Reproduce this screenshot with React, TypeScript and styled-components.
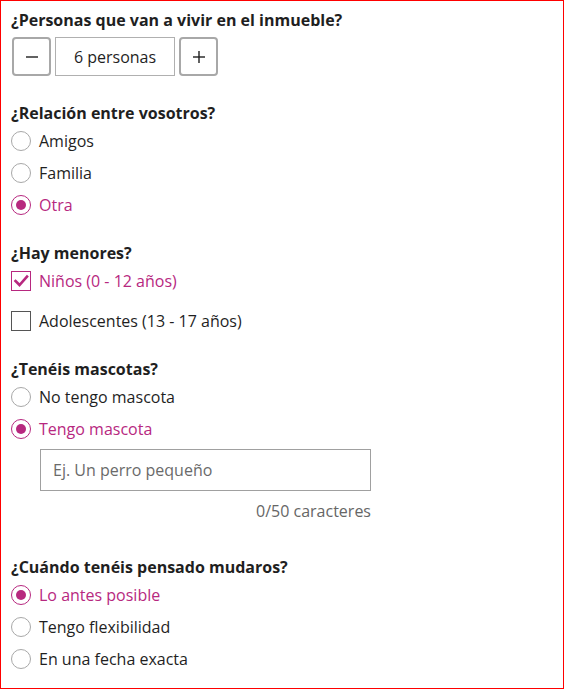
import React, { useState } from "react";
import styled, { createGlobalStyle } from "styled-components";

const ACCENT = "#b7287f";
const TEXT = "#1f1f1f";

const Global = createGlobalStyle`
  html, body { margin: 0; padding: 0; background: #fff; }
  body { font-family: "Open Sans", "Noto Sans", Arial, sans-serif; color: ${TEXT}; }
  * { box-sizing: border-box; }
`;

const Page = styled.div`
  width: 564px;
  height: 689px;
  border: 1px solid #ff0000;
  padding: 7px 10px 0 10px;
  display: flex;
  flex-direction: column;
  gap: 20px;
`;

const Section = styled.section`
  display: flex;
  flex-direction: column;
`;

const Heading = styled.h3`
  margin: 0;
  font-size: 16px;
  font-weight: 700;
  line-height: 24px;
  color: ${TEXT};
`;

const Stepper = styled.div`
  display: flex;
  align-items: center;
  gap: 4px;
  margin: 5px 0 5px 1px;
`;

const StepButton = styled.button`
  width: 39px;
  height: 39px;
  border: 2px solid #a8a8a8;
  border-radius: 4px;
  background: #fff;
  display: flex;
  align-items: center;
  justify-content: center;
  padding: 0;
  cursor: pointer;
  color: ${TEXT};
`;

const StepValue = styled.div`
  width: 120px;
  height: 39px;
  border: 1px solid #b0b0b0;
  display: flex;
  align-items: center;
  justify-content: center;
  font-size: 16px;
  color: ${TEXT};
`;

const Row = styled.label<{ $checked?: boolean }>`
  display: flex;
  align-items: center;
  gap: 8px;
  height: 32px;
  font-size: 16px;
  color: ${(p) => (p.$checked ? ACCENT : TEXT)};
  cursor: pointer;
`;

const CheckList = styled.div`
  display: flex;
  flex-direction: column;
  gap: 8px;
`;

const RadioCircle = styled.span<{ $checked?: boolean }>`
  width: 20px;
  height: 20px;
  border-radius: 50%;
  border: ${(p) => (p.$checked ? `1.5px solid ${ACCENT}` : "1px solid #a8a8a8")};
  display: flex;
  align-items: center;
  justify-content: center;
  flex-shrink: 0;
  &::after {
    content: "";
    width: 10px;
    height: 10px;
    border-radius: 50%;
    background: ${ACCENT};
    display: ${(p) => (p.$checked ? "block" : "none")};
  }
`;

const Box = styled.span<{ $checked?: boolean }>`
  width: 20px;
  height: 20px;
  border: ${(p) => (p.$checked ? `1px solid ${ACCENT}` : "1.5px solid #555")};
  display: flex;
  align-items: center;
  justify-content: center;
  flex-shrink: 0;
`;

const TextInput = styled.input`
  margin: 4px 0 0 29px;
  width: 331px;
  height: 42px;
  border: 1px solid #a0a0a0;
  padding: 0 12px;
  font-family: inherit;
  font-size: 16px;
  color: ${TEXT};
  outline: none;
  &::placeholder { color: #6a6a6a; }
`;

const Counter = styled.div`
  width: 360px;
  text-align: right;
  font-size: 16px;
  line-height: 24px;
  color: #666;
  margin: 8px 0 12px 0;
`;

function Radio({ label, checked }: { label: string; checked?: boolean }) {
  return (
    <Row $checked={checked}>
      <RadioCircle $checked={checked} />
      {label}
    </Row>
  );
}

function Check({ label, checked }: { label: string; checked?: boolean }) {
  return (
    <Row $checked={checked}>
      <Box $checked={checked}>
        {checked && (
          <svg width="16" height="16" viewBox="0 0 16 16">
            <polyline points="2.5,8 6.5,12 14,3.5" fill="none" stroke={ACCENT} strokeWidth="2.6" strokeLinecap="square" />
          </svg>
        )}
      </Box>
      {label}
    </Row>
  );
}

export default function App() {
  const [count, setCount] = useState(6);
  const [pet, setPet] = useState("");
  return (
    <>
      <Global />
      <Page>
        <Section>
          <Heading>¿Personas que van a vivir en el inmueble?</Heading>
          <Stepper>
            <StepButton onClick={() => setCount((c) => Math.max(1, c - 1))} aria-label="menos">
              <svg width="14" height="14" viewBox="0 0 14 14">
                <line x1="1" y1="7" x2="13" y2="7" stroke={TEXT} strokeWidth="1.4" />
              </svg>
            </StepButton>
            <StepValue>{count} personas</StepValue>
            <StepButton onClick={() => setCount((c) => c + 1)} aria-label="más">
              <svg width="14" height="14" viewBox="0 0 14 14">
                <line x1="1" y1="7" x2="13" y2="7" stroke={TEXT} strokeWidth="1.4" />
                <line x1="7" y1="1" x2="7" y2="13" stroke={TEXT} strokeWidth="1.4" />
              </svg>
            </StepButton>
          </Stepper>
        </Section>

        <Section>
          <Heading>¿Relación entre vosotros?</Heading>
          <Radio label="Amigos" />
          <Radio label="Familia" />
          <Radio label="Otra" checked />
        </Section>

        <Section>
          <Heading>¿Hay menores?</Heading>
          <CheckList>
            <Check label="Niños (0 - 12 años)" checked />
            <Check label="Adolescentes (13 - 17 años)" />
          </CheckList>
        </Section>

        <Section>
          <Heading>¿Tenéis mascotas?</Heading>
          <Radio label="No tengo mascota" />
          <Radio label="Tengo mascota" checked />
          <TextInput
            placeholder="Ej. Un perro pequeño"
            value={pet}
            maxLength={50}
            onChange={(e) => setPet(e.target.value)}
          />
          <Counter>{pet.length}/50 caracteres</Counter>
        </Section>

        <Section>
          <Heading>¿Cuándo tenéis pensado mudaros?</Heading>
          <Radio label="Lo antes posible" checked />
          <Radio label="Tengo flexibilidad" />
          <Radio label="En una fecha exacta" />
        </Section>
      </Page>
    </>
  );
}
